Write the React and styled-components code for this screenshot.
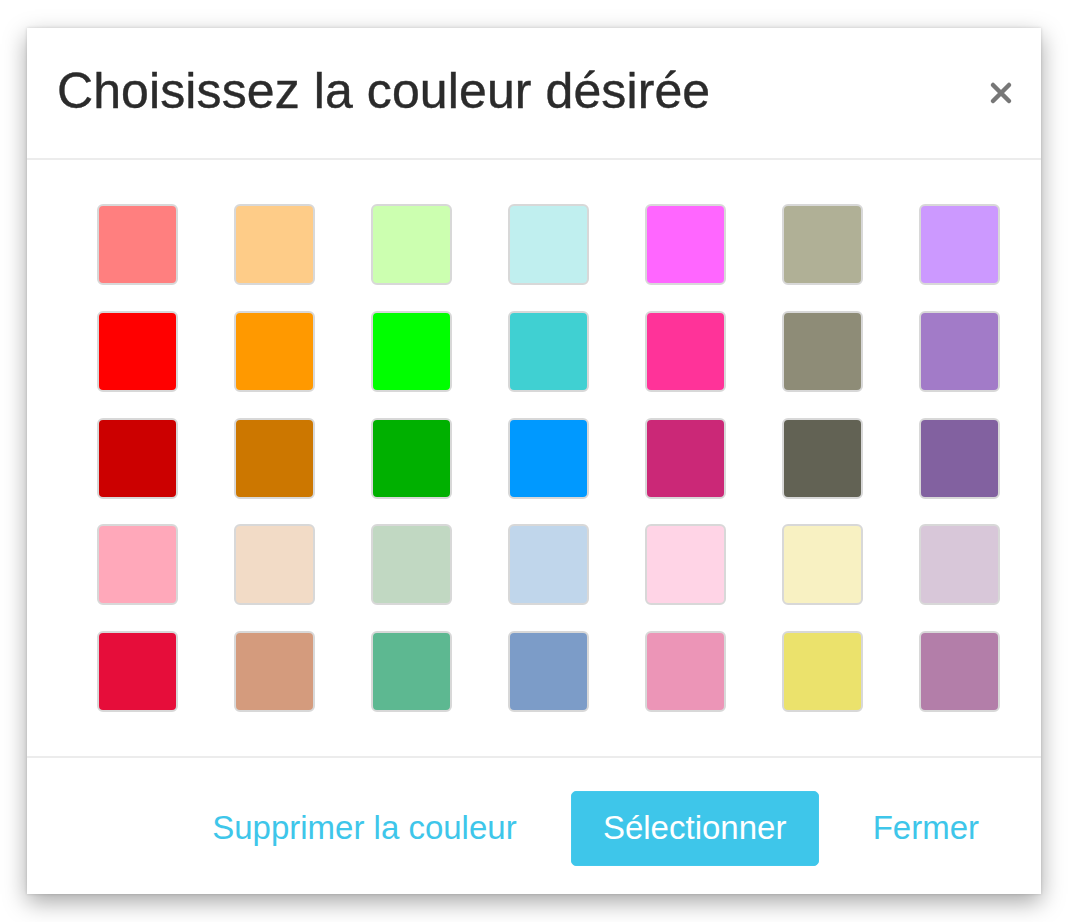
import React, {useState} from 'react'
import styled, {createGlobalStyle} from 'styled-components'

const GlobalStyle = createGlobalStyle`
  html, body {
    margin: 0;
    background: #ffffff;
    font-family: "Liberation Sans", Arial, sans-serif;
  }
`;

const colors = [
  ['#ff7f7f', '#fecc88', '#ccffb0', '#c0efef', '#ff66ff', '#b0b096', '#cc99ff'],
  ['#ff0000', '#ff9900', '#00ff00', '#40d0d2', '#ff3399', '#8e8c77', '#a27bc8'],
  ['#cc0000', '#cc7700', '#00b000', '#0099ff', '#cb2877', '#626254', '#8261a0'],
  ['#ffa8ba', '#f2dbc6', '#c1d8c2', '#c0d6eb', '#ffd4e6', '#f8f1c2', '#d8c7d9'],
  ['#e60d3a', '#d49b7d', '#5db891', '#7c9cc8', '#ec95b7', '#ebe26c', '#b37ea9'],
];

function App() {
  const [selected, setSelected] = useState(null);

  return <>
    <GlobalStyle />
    <Page>
      <Modal>
        <Header>
          <Title>Choisissez la couleur désirée</Title>
          <Close aria-label="close">
            <svg width="24" height="24" viewBox="0 0 24 24">
              <path d="M4 4 L20 20 M20 4 L4 20" stroke="#777" strokeWidth="4.5" strokeLinecap="round" />
            </svg>
          </Close>
        </Header>
        <Body>
          <Grid>
            {colors.flat().map((c, i) => (
              <Swatch key={i} color={c} active={selected === i} onClick={() => setSelected(i)} />
            ))}
          </Grid>
        </Body>
        <Footer>
          <LinkButton>Supprimer la couleur</LinkButton>
          <PrimaryButton>Sélectionner</PrimaryButton>
          <LinkButton>Fermer</LinkButton>
        </Footer>
      </Modal>
    </Page>
  </>
}

export default App

const Page = styled.div`
  padding: 28px 27px;
`;
const Modal = styled.div`
  width: 1014px;
  background: #fff;
  box-shadow: 0 8px 22px rgba(0, 0, 0, 0.35), 0 0 3px rgba(0, 0, 0, 0.15);
`;
const Header = styled.div`
  height: 130px;
  display: flex;
  align-items: center;
  justify-content: space-between;
  padding: 0 28px 0 30px;
  border-bottom: 2px solid #ececec;
`;
const Title = styled.h2`
  margin: 0 0 4px;
  font-size: 50px;
  font-weight: 400;
  color: #2b2b2b;
  letter-spacing: 0.1px;
  -webkit-text-stroke: 0.4px #2b2b2b;
`;
const Close = styled.button`
  border: none;
  background: none;
  padding: 0;
  width: 24px;
  height: 24px;
  cursor: pointer;
  display: flex;
`;
const Body = styled.div`
  padding: 44px 40px 44px 70px;
  border-bottom: 2px solid #ececec;
`;
const Grid = styled.div`
  display: grid;
  grid-template-columns: repeat(7, 81px);
  column-gap: 56px;
  row-gap: 25.8px;
`;
const Swatch = styled.div`
  width: 81px;
  height: 81px;
  box-sizing: border-box;
  border: 2px solid ${p => p.active ? '#3ec6ea' : '#d8d8d8'};
  border-radius: 6px;
  background: ${p => p.color};
  cursor: pointer;
`;
const Footer = styled.div`
  height: 136px;
  box-sizing: border-box;
  display: flex;
  align-items: center;
  justify-content: flex-end;
  padding: 4px 40px 0 0;
`;
const LinkButton = styled.button`
  border: none;
  background: none;
  color: #3ec6ea;
  font-family: "Liberation Sans", Arial, sans-serif;
  font-size: 33px;
  padding: 0 22px;
  cursor: pointer;
`;
const PrimaryButton = styled.button`
  border: 1px solid #44c8ec;
  background: #3ec6ea;
  color: #fff;
  font-family: "Liberation Sans", Arial, sans-serif;
  font-size: 33px;
  width: 248px;
  height: 75px;
  border-radius: 5px;
  margin: 0 32px;
  cursor: pointer;
`;
